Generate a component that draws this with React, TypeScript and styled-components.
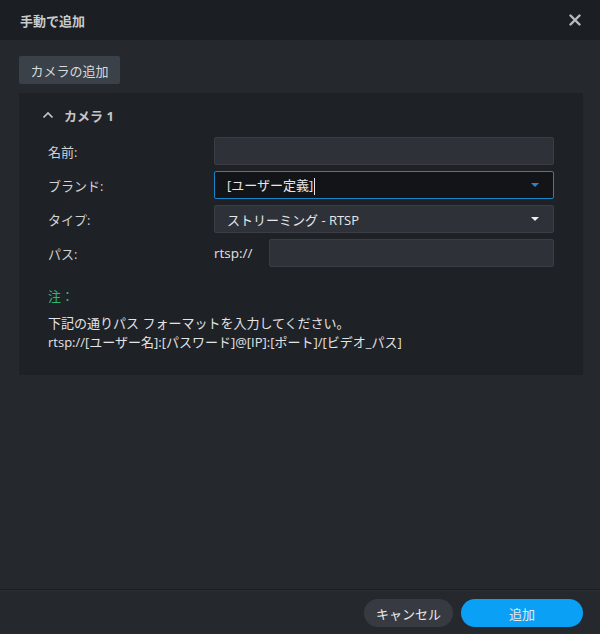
import React from "react";
import styled, { createGlobalStyle } from "styled-components";

const GlobalStyle = createGlobalStyle`
  html, body {
    margin: 0;
    padding: 0;
    background: #25282d;
  }
  body {
    font-family: "Open Sans", "Noto Sans CJK JP", sans-serif;
    font-size: 13px;
    color: #d4d6d9;
  }
`;

const Dialog = styled.div`
  width: 600px;
  height: 634px;
  display: flex;
  flex-direction: column;
  background: #25282d;
`;

const Header = styled.div`
  height: 40px;
  flex: none;
  display: flex;
  align-items: center;
  justify-content: space-between;
  padding: 0 18px 0 20px;
  background: #1b1e22;
`;

const Title = styled.div`
  font-size: 13px;
  font-weight: 700;
  color: #c9cbce;
`;

const CloseButton = styled.button`
  border: 0;
  background: none;
  padding: 0;
  width: 14px;
  height: 14px;
  display: flex;
  align-items: center;
  justify-content: center;
  cursor: pointer;
`;

const Body = styled.div`
  flex: 1;
  padding: 16px 17px 0 19px;
  display: flex;
  flex-direction: column;
  align-items: flex-start;
  gap: 9px;
`;

const AddCameraButton = styled.button`
  height: 28px;
  width: 101px;
  padding: 0;
  border: 0;
  border-radius: 2px;
  background: #3a4148;
  color: #d8dadc;
  font-family: inherit;
  font-size: 13px;
`;

const Panel = styled.div`
  align-self: stretch;
  background: #1e2125;
  padding: 10px 29px 23px 23px;
`;

const PanelHeader = styled.div`
  display: flex;
  align-items: center;
  gap: 10px;
  height: 24px;
  font-weight: 700;
  color: #c4c6c9;
  margin-bottom: 10px;
`;

const Form = styled.div`
  display: flex;
  flex-direction: column;
  gap: 6px;
  padding-left: 6px;
`;

const Row = styled.div`
  display: grid;
  grid-template-columns: 166px 1fr;
  align-items: center;
  height: 28px;
`;

const Label = styled.div`
  color: #d0d2d5;
`;

const Field = styled.div<{ $active?: boolean }>`
  height: 28px;
  box-sizing: border-box;
  display: flex;
  align-items: center;
  justify-content: space-between;
  padding: 0 14px 0 12px;
  border-radius: 2px;
  border: 1px solid ${(p) => (p.$active ? "#1a83c9" : "#3a3e44")};
  background: ${(p) => (p.$active ? "#121417" : "#2e3238")};
  color: #e6e7e9;
`;

const Caret = styled.span`
  display: inline-block;
  width: 1px;
  height: 17px;
  margin-left: 1px;
  background: #e6e7e9;
  vertical-align: middle;
`;

const Arrow = styled.span<{ $color: string }>`
  width: 0;
  height: 0;
  border-left: 4px solid transparent;
  border-right: 4px solid transparent;
  border-top: 4px solid ${(p) => p.$color};
`;

const PathCell = styled.div`
  display: flex;
  align-items: center;
  gap: 14px;
`;

const Prefix = styled.span`
  color: #e0e1e3;
  width: 41px;
  font-size: 13.5px;
`;

const PathInput = styled(Field)`
  flex: 1;
`;

const Note = styled.div`
  margin-top: 20px;
  padding-left: 6px;
  line-height: 19px;
`;

const NoteTitle = styled.div`
  color: #2fb57a;
  margin-bottom: 8px;
`;

const NoteText = styled.div`
  color: #e2e3e5;
`;

const Footer = styled.div`
  height: 45px;
  flex: none;
  border-top: 1px solid #1b1d21;
  box-shadow: inset 0 1px 0 #2c2f34;
  display: flex;
  align-items: flex-start;
  justify-content: flex-end;
  gap: 8px;
  padding: 9px 17px 0 0;
  box-sizing: border-box;
`;

const PillButton = styled.button<{ $primary?: boolean }>`
  height: 28px;
  width: ${(p) => (p.$primary ? "122px" : "89px")};
  border: 0;
  border-radius: 14px;
  padding: 0;
  font-family: inherit;
  font-size: 13px;
  color: #e8eaec;
  background: ${(p) => (p.$primary ? "#0aa0f5" : "#373b41")};
`;

export default function App() {
  return (
    <>
      <GlobalStyle />
      <Dialog>
        <Header>
          <Title>手動で追加</Title>
          <CloseButton aria-label="close">
            <svg width="12" height="12" viewBox="0 0 12 12">
              <path d="M1.5 1.5 L10.5 10.5 M10.5 1.5 L1.5 10.5" stroke="#b9bbbe" strokeWidth="2.4" strokeLinecap="round" />
            </svg>
          </CloseButton>
        </Header>
        <Body>
          <AddCameraButton>カメラの追加</AddCameraButton>
          <Panel>
            <PanelHeader>
              <svg width="12" height="8" viewBox="0 0 12 8">
                <path d="M1.5 6.5 L6 2 L10.5 6.5" fill="none" stroke="#c4c6c9" strokeWidth="1.7" />
              </svg>
              <span>カメラ 1</span>
            </PanelHeader>
            <Form>
              <Row>
                <Label>名前:</Label>
                <Field />
              </Row>
              <Row>
                <Label>ブランド:</Label>
                <Field $active>
                  <span>
                    [ユーザー定義]
                    <Caret />
                  </span>
                  <Arrow $color="#2a86c8" />
                </Field>
              </Row>
              <Row>
                <Label>タイプ:</Label>
                <Field>
                  <span>ストリーミング - RTSP</span>
                  <Arrow $color="#eeeeee" />
                </Field>
              </Row>
              <Row>
                <Label>パス:</Label>
                <PathCell>
                  <Prefix>rtsp://</Prefix>
                  <PathInput />
                </PathCell>
              </Row>
            </Form>
            <Note>
              <NoteTitle>注：</NoteTitle>
              <NoteText>下記の通りパス フォーマットを入力してください。</NoteText>
              <NoteText>rtsp://[ユーザー名]:[パスワード]@[IP]:[ポート]/[ビデオ_パス]</NoteText>
            </Note>
          </Panel>
        </Body>
        <Footer>
          <PillButton>キャンセル</PillButton>
          <PillButton $primary>追加</PillButton>
        </Footer>
      </Dialog>
    </>
  );
}
